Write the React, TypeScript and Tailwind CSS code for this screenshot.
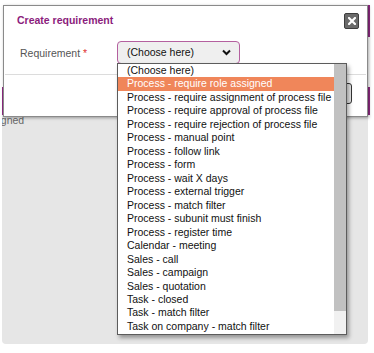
import React from "react";

const items = [
  "(Choose here)",
  "Process - require role assigned",
  "Process - require assignment of process file",
  "Process - require approval of process file",
  "Process - require rejection of process file",
  "Process - manual point",
  "Process - follow link",
  "Process - form",
  "Process - wait X days",
  "Process - external trigger",
  "Process - match filter",
  "Process - subunit must finish",
  "Process - register time",
  "Calendar - meeting",
  "Sales - call",
  "Sales - campaign",
  "Sales - quotation",
  "Task - closed",
  "Task - match filter",
  "Task on company - match filter",
];

export default function App() {
  return (
    <div
      className="relative w-[374px] h-[353px] bg-white overflow-hidden text-[10.5px]"
      style={{ fontFamily: '"Liberation Sans", Arial, sans-serif' }}
    >
      {/* page behind */}
      <div className="flex flex-col pt-[5px]">
        <div className="h-[32px] mx-[2px] w-[368px] border-r-[3px] border-[#8e2a82]" />
        <div className="h-[50px]" />
        <div className="h-[28px] ml-[2px] w-[368px] border-l-[2px] border-r-[3px] border-[#8e2a82]" />
        <div className="ml-[2px] w-[366px] h-[229px] bg-[#e6e6e6] rounded-b-[4px] overflow-hidden">
          <div className="-ml-[21px] text-[#666] leading-[12px] mt-[-1px]">Assigned</div>
        </div>
      </div>

      {/* dialog */}
      <div className="absolute left-[3px] top-[5px] w-[365px] h-[112px] bg-white border border-[#8a8a8a] shadow-[1px_1px_3px_rgba(0,0,0,0.35)] flex flex-col">
        <div className="flex items-start justify-between pl-[13px] pr-[8px] pt-[6px] h-[30px]">
          <div className="font-bold text-[#8b1c7c] leading-[16px]">Create requirement</div>
          <div className="mt-[1px] w-[15px] h-[16px] bg-[#6a6a6a] border border-[#3d3d3d] rounded-[2px] flex items-center justify-center">
            <svg width="8" height="8" viewBox="0 0 8 8">
              <path d="M1 1 L7 7 M7 1 L1 7" stroke="white" strokeWidth="2.2" strokeLinecap="square" />
            </svg>
          </div>
        </div>
        <div className="flex items-center pl-[16px] h-[23px] mt-[5px]">
          <div className="w-[97px] text-[#555] leading-[14px]">
            Requirement <span className="text-[#e03030]">*</span>
          </div>
          <div className="w-[123px] h-[23px] border border-[#b4609f] rounded-[4px] bg-[#efefef] flex items-center justify-between pl-[9px] pr-[8px] text-[#111]">
            <span>(Choose here)</span>
            <svg width="9" height="7" viewBox="0 0 9 7">
              <path d="M1 1.5 L4.5 5 L8 1.5" stroke="#111" strokeWidth="2" fill="none" />
            </svg>
          </div>
        </div>
        <div className="mt-[10px] mx-[1px] h-px bg-[#dcdcdc]" />
        <div className="flex justify-end pr-[15px] pt-[8px]">
          <div className="w-[70px] h-[21px] rounded-[3px] border border-[#333] bg-[#e9e9e9]" />
        </div>
      </div>

      {/* dropdown list */}
      <div className="absolute left-[117px] top-[63px] w-[230px] h-[272px] bg-white border border-[#5c5c5c] shadow-[2px_3px_4px_rgba(0,0,0,0.35)] flex">
        <div className="flex-1 flex flex-col">
          {items.map((t, i) => (
            <div
              key={t}
              className={
                "h-[13.47px] leading-[13.47px] pl-[9px] whitespace-nowrap " +
                (i === 1 ? "bg-[#f0865a] text-white" : "text-[#111]")
              }
            >
              {t}
            </div>
          ))}
        </div>
        <div className="w-[12px] flex flex-col bg-[#f1f1f1]">
          <div className="h-[247px] bg-[#c1c1c1]" />
        </div>
      </div>
    </div>
  );
}
